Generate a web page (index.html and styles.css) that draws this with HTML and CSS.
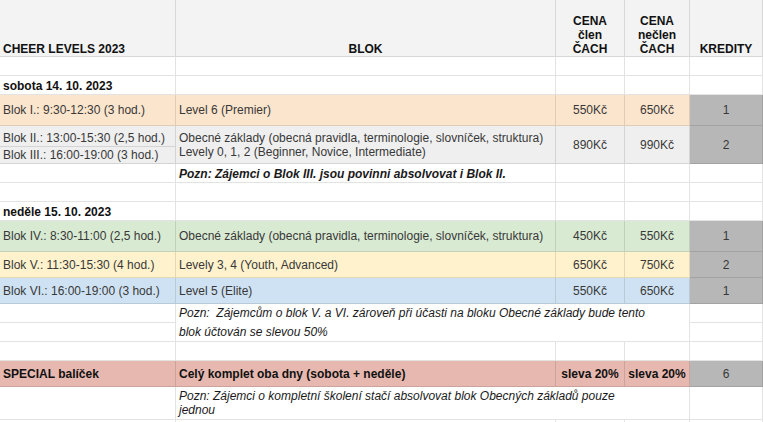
FILE: index.html
```html
<!DOCTYPE html>
<html lang="cs">
<head>
<meta charset="utf-8">
<title>Cheer Levels 2023</title>
<link rel="stylesheet" href="styles.css">
</head>
<body>
<div class="sheet">
  <!-- header -->
  <div class="c hd b">CHEER LEVELS 2023</div>
  <div class="c hd b ctr">BLOK</div>
  <div class="c hd b ctr"><span>CENA<br>člen<br>ČACH</span></div>
  <div class="c hd b ctr"><span>CENA<br>nečlen<br>ČACH</span></div>
  <div class="c hd b ctr">KREDITY</div>

  <div class="c"></div><div class="c"></div><div class="c"></div><div class="c"></div><div class="c"></div>

  <div class="c b">sobota 14. 10. 2023</div><div class="c"></div><div class="c"></div><div class="c"></div><div class="c"></div>

  <div class="c mid peach">Blok I.: 9:30-12:30 (3 hod.)</div>
  <div class="c mid peach">Level 6 (Premier)</div>
  <div class="c mid ctr peach">550Kč</div>
  <div class="c mid ctr peach">650Kč</div>
  <div class="c mid ctr gr">1</div>

  <div class="c lg">Blok II.: 13:00-15:30 (2,5 hod.)</div>
  <div class="c mid lg span-r2"><span>Obecné základy (obecná pravidla, terminologie, slovníček, struktura)<br>Levely 0, 1, 2 (Beginner, Novice, Intermediate)</span></div>
  <div class="c mid ctr lg span-r2">890Kč</div>
  <div class="c mid ctr lg span-r2">990Kč</div>
  <div class="c mid ctr gr span-r2">2</div>
  <div class="c lg">Blok III.: 16:00-19:00 (3 hod.)</div>

  <div class="c"></div>
  <div class="c note b">Pozn: Zájemci o Blok III. jsou povinni absolvovat i Blok II.</div>
  <div class="c"></div><div class="c"></div><div class="c"></div>

  <div class="c"></div><div class="c"></div><div class="c"></div><div class="c"></div><div class="c"></div>

  <div class="c b">neděle 15. 10. 2023</div><div class="c"></div><div class="c"></div><div class="c"></div><div class="c"></div>

  <div class="c mid green">Blok IV.: 8:30-11:00 (2,5 hod.)</div>
  <div class="c mid green">Obecné základy (obecná pravidla, terminologie, slovníček, struktura)</div>
  <div class="c mid ctr green">450Kč</div>
  <div class="c mid ctr green">550Kč</div>
  <div class="c mid ctr gr">1</div>

  <div class="c mid yel">Blok V.: 11:30-15:30 (4 hod.)</div>
  <div class="c mid yel">Levely 3, 4 (Youth, Advanced)</div>
  <div class="c mid ctr yel">650Kč</div>
  <div class="c mid ctr yel">750Kč</div>
  <div class="c mid ctr gr">2</div>

  <div class="c mid blue">Blok VI.: 16:00-19:00 (3 hod.)</div>
  <div class="c mid blue">Level 5 (Elite)</div>
  <div class="c mid ctr blue">550Kč</div>
  <div class="c mid ctr blue">650Kč</div>
  <div class="c mid ctr gr">1</div>

  <div class="c"></div>
  <div class="c mid note span-c3 span-r2 tall"><span>Pozn:&nbsp; Zájemcům o blok V. a VI. zároveň při účasti na bloku Obecné základy bude tento<br>blok účtován se slevou 50%</span></div>
  <div class="c"></div>
  <div class="c"></div>
  <div class="c"></div>

  <div class="c"></div><div class="c"></div><div class="c"></div><div class="c"></div><div class="c"></div>

  <div class="c mid b red">SPECIAL balíček</div>
  <div class="c mid b red">Celý komplet oba dny (sobota + neděle)</div>
  <div class="c mid ctr b red">sleva 20%</div>
  <div class="c mid ctr b red">sleva 20%</div>
  <div class="c mid ctr gr">6</div>

  <div class="c"></div>
  <div class="c mid note span-c3"><span>Pozn: Zájemci o kompletní školení stačí absolvovat blok Obecných základů pouze<br>jednou</span></div>
  <div class="c"></div>

  <div class="c"></div><div class="c"></div><div class="c"></div><div class="c"></div><div class="c"></div>
</div>
</body>
</html>
```
FILE: styles.css
```css
html, body {
  margin: 0;
  padding: 0;
  background: #ffffff;
  overflow: hidden;
}

.sheet {
  display: grid;
  grid-template-columns: 176px 380px 69px 65px 73px;
  grid-template-rows: 57px 19px 19px 31px 21px 17px 19px 19px 19px 31px 26px 26px 19px 19px 19px 26px 33px 20px;
  width: 763px;
  font-family: "Liberation Sans", Arial, sans-serif;
  font-size: 12px;
  line-height: 14px;
  color: #383838;
}

.c {
  box-sizing: border-box;
  display: flex;
  align-items: flex-end;
  padding: 0 3px 1px 3px;
  border-right: 1px solid rgba(0, 0, 0, 0.11);
  border-bottom: 1px solid rgba(0, 0, 0, 0.11);
  white-space: nowrap;
  min-width: 0;
}

.mid { align-items: center; padding-bottom: 0; }
.ctr { justify-content: center; text-align: center; }
.b { font-weight: bold; color: #111111; }
.note { font-style: italic; color: #1a1a1a; }
.tall { line-height: 19px; }

.span-r2 { grid-row: span 2; }
.span-c3 { grid-column: span 3; }

.hd { background: #f3f3f3; padding-bottom: 0; }
.peach { background: #fce5cd; }
.lg { background: #efefef; }
.gr { background: #b7b7b7; }
.green { background: #d9ead3; }
.yel { background: #fff2cc; }
.blue { background: #cfe2f3; }
.red { background: #e6b8af; }
```
